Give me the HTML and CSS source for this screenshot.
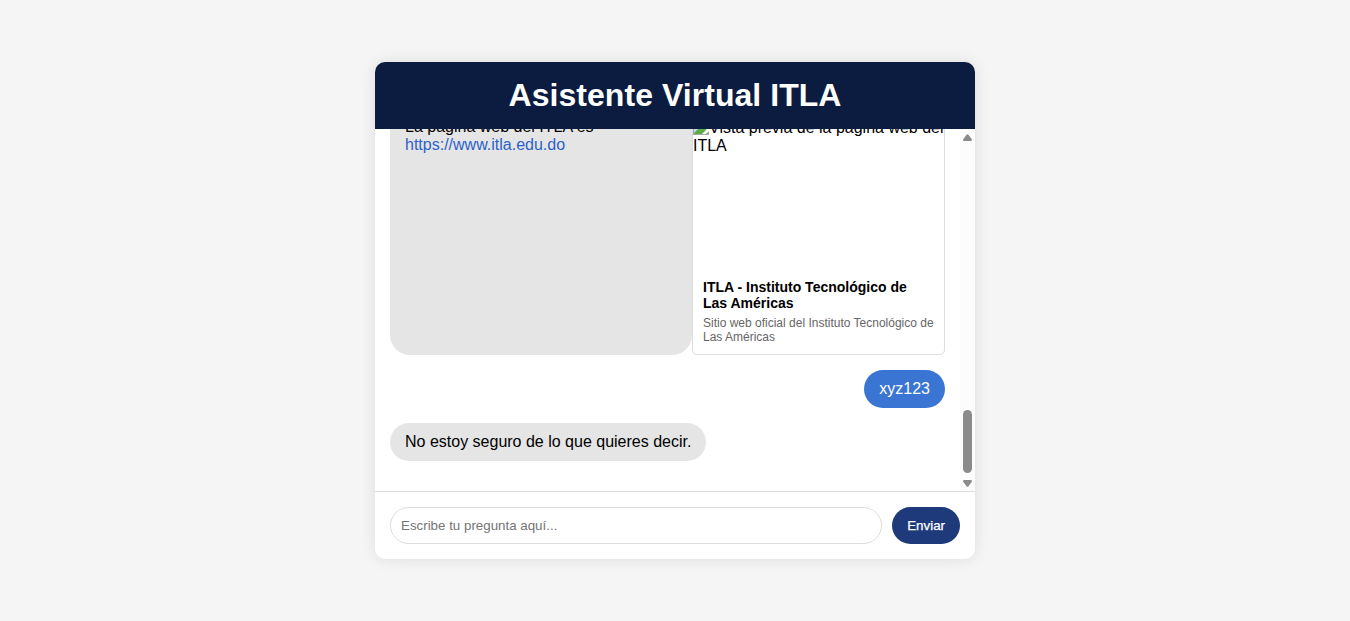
FILE: index.html
```html
<!DOCTYPE html>
<html lang="es">
<head>
<meta charset="utf-8">
<title>Asistente Virtual ITLA</title>
<link rel="stylesheet" href="styles.css">
</head>
<body>
<main class="chat">
  <header class="chat-header"><h1>Asistente Virtual ITLA</h1></header>
  <section class="chat-body">
    <div class="messages">
      <div class="message bot">
        <div class="bubble">La página web del ITLA es <a class="link">https://www.itla.edu.do</a></div>
        <article class="preview">
          <div class="preview-image"><svg class="broken" width="16" height="16" viewBox="0 0 16 16"><path d="M0 0h11l5 5v11H0z" fill="#a6a6a6"/><path d="M1 1h9v5h5v9H1z" fill="#c5d6f5"/><path d="M1 15v-1l5-5h6l3 3v3z" fill="#5cad46"/><path d="M9 15L15 9h1v3l-3 3z" fill="#fff"/></svg>Vista previa de la página web del ITLA</div>
          <div class="preview-info">
            <h2>ITLA - Instituto Tecnológico de Las Américas</h2>
            <p>Sitio web oficial del Instituto Tecnológico de Las Américas</p>
          </div>
        </article>
      </div>
      <div class="message user"><div class="bubble">xyz123</div></div>
      <div class="message bot"><div class="bubble">No estoy seguro de lo que quieres decir.</div></div>
    </div>
    <div class="scrollbar">
      <svg width="9" height="7" viewBox="0 0 9 7"><path d="M3.5.8Q4.5-.3 5.5.8L8.8 5.3Q9.2 7 8 7H1Q-.2 7 .2 5.3z"/></svg>
      <div class="thumb"></div>
      <svg width="9" height="7" viewBox="0 0 9 7"><path d="M3.5 6.2Q4.5 7.3 5.5 6.2L8.8 1.7Q9.2 0 8 0H1Q-.2 0 .2 1.7z"/></svg>
    </div>
  </section>
  <footer class="chat-input">
    <input type="text" placeholder="Escribe tu pregunta aquí...">
    <button type="button">Enviar</button>
  </footer>
</main>
</body>
</html>
```
FILE: styles.css
```css
* { box-sizing: border-box; }
body {
  margin: 0;
  height: 100vh;
  display: flex;
  justify-content: center;
  align-items: center;
  background: #f5f5f5;
  font-family: Arial, "Liberation Sans", sans-serif;
  font-size: 16px;
}
.chat {
  width: 600px;
  height: 80vh;
  display: flex;
  flex-direction: column;
  background: #fff;
  border-radius: 10px;
  overflow: hidden;
  box-shadow: 0 0 15px rgba(0, 0, 0, .1);
}
.chat-header {
  flex: none;
  height: 67px;
  padding: 15px;
  background: #0c1c40;
  color: #fff;
  text-align: center;
}
.chat-header h1 { margin: 0; font-size: 32px; line-height: 37px; letter-spacing: .05px; }
.chat-body { flex: 1; min-height: 0; display: flex; }
.messages {
  flex: 1;
  min-width: 0;
  display: flex;
  flex-direction: column;
  justify-content: flex-end;
  padding: 15px;
  overflow: hidden;
}
.message { flex: none; display: flex; margin-bottom: 15px; }
.user { justify-content: flex-end; }
.bubble {
  padding: 10px 15px;
  border-radius: 20px;
  background: #e5e5e5;
  line-height: 18px;
}
.user .bubble { background: #3a75d3; color: #fff; }
.link { color: #2b62c9; }
.preview {
  flex: none;
  width: 253px;
  margin-top: 10px;
  border: 1px solid #ddd;
  border-radius: 5px;
  overflow: hidden;
}
.preview-image { height: 150px; line-height: 18px; margin-right: -10px; padding-right: 8px; }
.broken { vertical-align: -2px; }
.preview-info { padding: 10px; }
.preview-info h2 { margin: 0 0 5px; font-size: 14px; line-height: 16px; }
.preview-info p { margin: 0; font-size: 12px; line-height: 14px; color: #666; }
.scrollbar {
  width: 15px;
  display: flex;
  flex-direction: column;
  align-items: center;
  padding: 5px 0 4px;
  background: #fcfcfc;
}
.scrollbar svg { flex: none; fill: #8b8b8b; }
.thumb { width: 9px; height: 63px; margin: auto 0 7px; border-radius: 5px; background: #8b8b8b; }
.chat-input {
  flex: none;
  display: flex;
  gap: 10px;
  padding: 15px;
  border-top: 1px solid #ddd;
}
.chat-input input {
  flex: 1;
  height: 37px;
  padding: 10px;
  border: 1px solid #ddd;
  border-radius: 20px;
  font: 13.333px Arial, "Liberation Sans", sans-serif;
}
.chat-input input::placeholder { color: #757575; }
.chat-input button {
  height: 37px;
  padding: 10px 15px;
  border: 0;
  border-radius: 20px;
  background: #1e3a7b;
  color: #fff;
  font: 13.333px Arial, "Liberation Sans", sans-serif;
  -webkit-text-stroke: .25px #fff;
}
```
